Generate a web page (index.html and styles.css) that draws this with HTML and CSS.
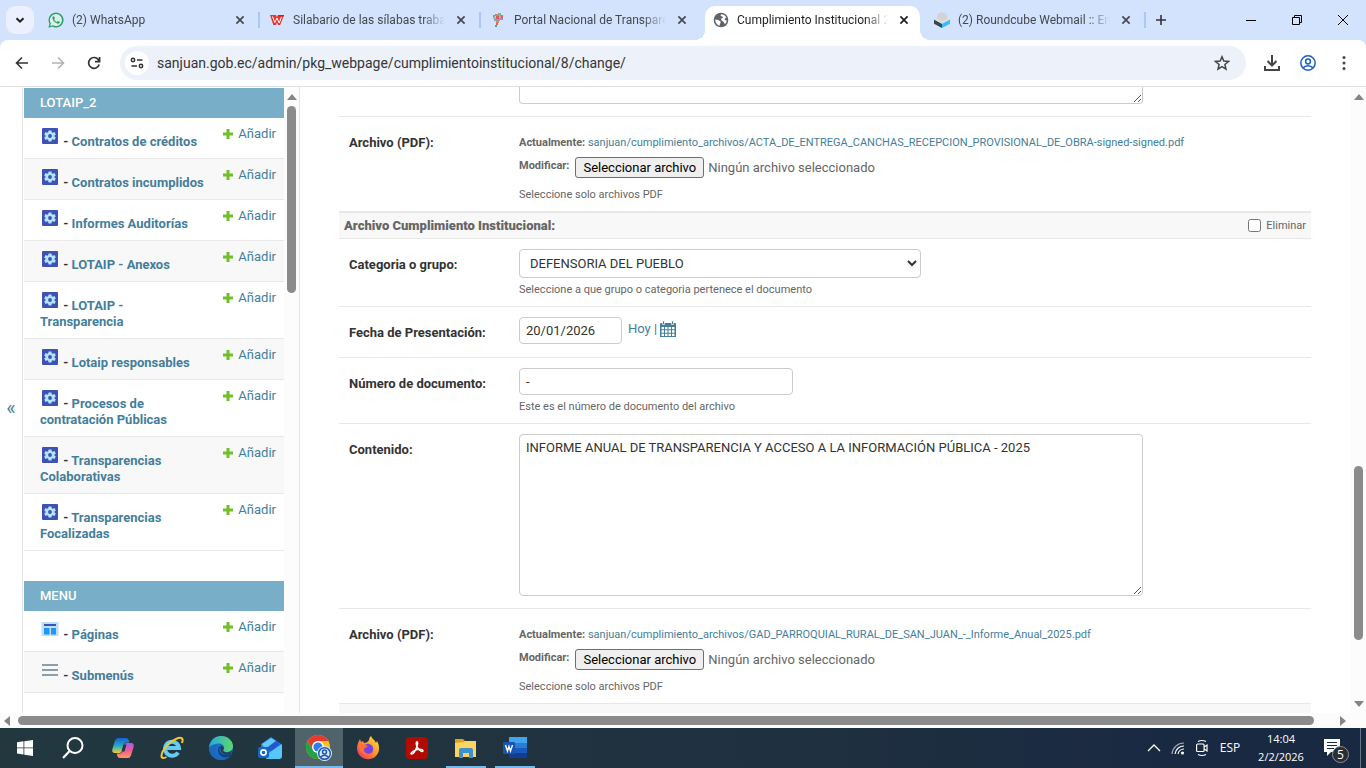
FILE: index.html
```html
<!DOCTYPE html>
<html lang="es">
<head>
<meta charset="utf-8">
<title>Cumplimiento Institucional</title>
<link rel="stylesheet" href="styles.css">
</head>
<body>
<svg class="defs" aria-hidden="true">
  <symbol id="close" viewBox="0 0 16 16"><path d="M4.400 4.400l7.200 7.200M11.600 4.400l-7.200 7.200" stroke="currentColor" stroke-width="1.700" fill="none"/></symbol>
  <symbol id="gear" viewBox="0 0 20 20"><rect x="2" y="2" width="16" height="16" rx="1" fill="#3f51b5"/><path fill="#b3e5fc" d="M8.600 4.500h2.800l.4 1.700 1 .5 1.700-.6 1.300 2.300-1.300 1.100v1l1.300 1.100-1.300 2.300-1.700-.6-1 .5-.4 1.700H8.600l-.4-1.700-1-.5-1.700.6-1.300-2.300 1.300-1.100v-1L4.200 8.400l1.300-2.300 1.700.6 1-.5z"/><circle cx="10" cy="10" r="1.900" fill="#3f51b5"/></symbol>
  <symbol id="plus" viewBox="0 0 12 12"><path d="M4.500 1h3v3.500H11v3H7.500V11h-3V7.500H1v-3h3.500z" fill="#70bf2b"/></symbol>
  <symbol id="grip" viewBox="0 0 10 10"><path d="M2 9L9 2M6 9l3-3" stroke="#555" stroke-width="1" fill="none"/></symbol>
</svg>

<header class="tabstrip">
  <button class="tab-search" aria-label="Buscar pestañas"><svg width="12" height="12" viewBox="0 0 12 12"><path d="M2.500 4.200L6 7.700l3.500-3.500" fill="none" stroke="#1f1f1f" stroke-width="2"/></svg></button>
  <div class="tab">
    <svg class="fav" viewBox="0 0 16 16"><path d="M.4 15.700l1.100-4A7.500 7.500 0 1 1 4.400 14.600z" fill="#25a366"/><path d="M2.200 13.900l.7-2.500a6 6 0 1 1 2 1.900z" fill="#dfeeed"/><path d="M5.600 4.200c-.5 0-1.300.8-1.200 1.900.2 2.600 3.600 5.600 5.700 5.600 1 0 1.900-.8 1.900-1.600 0-.4-1.700-1.200-2-1.200-.4 0-.7 1-1.100 1-.8-.1-2.600-1.700-2.700-2.500 0-.4.700-.7.600-1.200-.1-.4-.6-2-1.200-2z" fill="#25a366"/></svg>
    <span class="tab-title">(2) WhatsApp</span><button class="tab-close" aria-label="Cerrar"><svg viewBox="0 0 16 16"><use href="#close"/></svg></button>
  </div>
  <div class="tab">
    <svg class="fav" viewBox="0 0 16 16"><path d="M1 3h6l1 2 1-2h6l-3.800 10H8.800L8 10.300 7 13H4.300z" fill="#e8392e"/><path d="M3.500 4.500l2.300 6L8 6l2.200 5 2.400-6.500" fill="none" stroke="#fff" stroke-width="1"/><path d="M9 3h6l-.5 1.600H9.600z" fill="#c4201c"/></svg>
    <span class="tab-title">Silabario de las sílabas trabadas</span><button class="tab-close" aria-label="Cerrar"><svg viewBox="0 0 16 16"><use href="#close"/></svg></button>
  </div>
  <div class="tab no-line">
    <svg class="fav" viewBox="0 0 16 16"><g><rect x="3" y="3" width="2" height="2" fill="#5ba6c4"/><rect x="5" y="2" width="3" height="2" fill="#e2795a"/><rect x="8" y="1" width="3" height="3" fill="#6dbd9c"/><rect x="11" y="3" width="2" height="3" fill="#e05b6e"/><rect x="3" y="5" width="3" height="2" fill="#f0a45d"/><rect x="6" y="4" width="3" height="3" fill="#d35b6a"/><rect x="9" y="4" width="2" height="3" fill="#e8a06a"/><rect x="10" y="6" width="3" height="2" fill="#a38ab8"/><rect x="4" y="7" width="3" height="2" fill="#64b3ba"/><rect x="7" y="7" width="3" height="2" fill="#d98a7a"/><rect x="6" y="9" width="3" height="2" fill="#e58358"/><rect x="6" y="11" width="2" height="2" fill="#e05b6e"/><rect x="5" y="13" width="2" height="2" fill="#4f9fc4"/></g></svg>
    <span class="tab-title">Portal Nacional de Transparencia</span><button class="tab-close" aria-label="Cerrar"><svg viewBox="0 0 16 16"><use href="#close"/></svg></button>
  </div>
  <div class="tab active">
    <svg class="fav" viewBox="0 0 16 16"><circle cx="8" cy="8" r="7.300" fill="#5f6368"/><path d="M2.200 7.500l3.300.6 2.300 1.700-.6 1.800-.7 2.200C4 13 2.200 10.800 2.200 7.500z" fill="#fff"/><path d="M8 2.200c2.400 0 4.300 1.200 5.300 3.200L11.500 7l.8 1.300 1.500.2c-.2 1.500-.9 2.900-2 3.800L10.800 10 8.600 8.600 8 6.800l1.800-1-.4-1.300L7.600 4z" fill="#fff"/></svg>
    <span class="tab-title">Cumplimiento Institucional 2025</span><button class="tab-close" aria-label="Cerrar"><svg viewBox="0 0 16 16"><use href="#close"/></svg></button>
  </div>
  <div class="tab">
    <svg class="fav" viewBox="0 0 16 16"><circle cx="8" cy="5.500" r="5.200" fill="#d3d3d3"/><path d="M0 7.500l8 4.200v4.300l-8-4.200z" fill="#37474f"/><path d="M16 7.500l-8 4.200v4.300l8-4.200z" fill="#35beff"/><path d="M0 7.500l3-1.500 5 3 5-3 3 1.500-8 4.300z" fill="#d9dde0"/></svg>
    <span class="tab-title">(2) Roundcube Webmail :: Entrada</span><button class="tab-close" aria-label="Cerrar"><svg viewBox="0 0 16 16"><use href="#close"/></svg></button>
  </div>
  <button class="new-tab" aria-label="Nueva pestaña"><svg width="12" height="12" viewBox="0 0 12 12"><path d="M6 1v10M1 6h10" stroke="#333" stroke-width="1.600"/></svg></button>
  <div class="window-buttons">
    <button aria-label="Minimizar"><svg width="10" height="10" viewBox="0 0 10 10"><path d="M0 5.500h10" stroke="#000"/></svg></button>
    <button aria-label="Restaurar"><svg width="10" height="10" viewBox="0 0 10 10"><path d="M.5 2.500h7v7h-7zM2.500 2.500v-2h7v7h-2" fill="none" stroke="#000"/></svg></button>
    <button aria-label="Cerrar ventana"><svg width="10" height="10" viewBox="0 0 10 10"><path d="M0 0l10 10M10 0L0 10" stroke="#000"/></svg></button>
  </div>
</header>

<div class="toolbar-wrap">
<div class="toolbar">
  <div class="nav-buttons">
    <button aria-label="Atrás"><svg width="16" height="16" viewBox="0 0 16 16"><path d="M14 8H3M8 2.500L2.500 8 8 13.500" fill="none" stroke="#333" stroke-width="1.600"/></svg></button>
    <button aria-label="Adelante"><svg width="16" height="16" viewBox="0 0 16 16"><path d="M2 8h11M8 2.500L13.500 8 8 13.500" fill="none" stroke="#b0b2b5" stroke-width="1.600"/></svg></button>
    <button aria-label="Recargar"><svg width="16" height="16" viewBox="0 0 16 16"><path d="M13.200 9.500A5.400 5.400 0 1 1 12.600 5L13.500 6.500M13.600 2v4.700H9" fill="none" stroke="#333" stroke-width="1.700"/></svg></button>
  </div>
  <div class="omnibox">
    <button class="site-info" aria-label="Información del sitio"><svg width="14" height="14" viewBox="0 0 14 14"><g fill="none" stroke="#333" stroke-width="1.500"><circle cx="3" cy="4" r="1.700"/><path d="M7 4h5.500M1.500 10H7"/><circle cx="11" cy="10" r="1.700"/></g></svg></button>
    <input class="url" type="text" aria-label="Dirección" value="sanjuan.gob.ec/admin/pkg_webpage/cumplimientoinstitucional/8/change/">
    <button class="star" aria-label="Marcador"><svg width="16" height="16" viewBox="0 0 16 16"><path d="M8 1.800l1.800 4.300 4.700.4-3.600 3 1.100 4.600L8 11.700l-4 2.400 1.100-4.600-3.600-3 4.700-.4z" fill="none" stroke="#444" stroke-width="1.500"/></svg></button>
  </div>
  <div class="nav-buttons">
    <button aria-label="Descargas"><svg width="16" height="16" viewBox="0 0 16 16"><path d="M8 0v10M3.500 6L8 10.500 12.500 6M1 11v4h14v-4" fill="none" stroke="#444" stroke-width="2"/></svg></button>
    <button aria-label="Perfil"><svg width="16" height="16" viewBox="0 0 16 16"><g fill="none" stroke="#1a5dc8" stroke-width="1.500"><circle cx="8" cy="8" r="7.200"/><circle cx="8" cy="6.500" r="2.400"/><path d="M3 13c2.500-3 7.500-3 10 0"/></g></svg></button>
    <button aria-label="Menú"><svg width="16" height="16" viewBox="0 0 16 16"><g fill="#444"><circle cx="8" cy="2.500" r="1.500"/><circle cx="8" cy="8" r="1.500"/><circle cx="8" cy="13.500" r="1.500"/></g></svg></button>
  </div>
</div>
</div>

<div class="viewport">
  <button class="toggle-nav" aria-label="Conmutar navegación">«</button>
  <nav class="sidebar">
    <div class="modules">
      <table>
        <caption>LOTAIP_2</caption>
        <tr><th scope="row"><svg class="ico" viewBox="0 0 20 20"><use href="#gear"/></svg> - <a href="#">Contratos de créditos</a></th><td><a class="add" href="#"><svg viewBox="0 0 12 12"><use href="#plus"/></svg>Añadir</a></td></tr>
        <tr><th scope="row"><svg class="ico" viewBox="0 0 20 20"><use href="#gear"/></svg> - <a href="#">Contratos incumplidos</a></th><td><a class="add" href="#"><svg viewBox="0 0 12 12"><use href="#plus"/></svg>Añadir</a></td></tr>
        <tr><th scope="row"><svg class="ico" viewBox="0 0 20 20"><use href="#gear"/></svg> - <a href="#">Informes Auditorías</a></th><td><a class="add" href="#"><svg viewBox="0 0 12 12"><use href="#plus"/></svg>Añadir</a></td></tr>
        <tr><th scope="row"><svg class="ico" viewBox="0 0 20 20"><use href="#gear"/></svg> - <a href="#">LOTAIP - Anexos</a></th><td><a class="add" href="#"><svg viewBox="0 0 12 12"><use href="#plus"/></svg>Añadir</a></td></tr>
        <tr><th scope="row"><svg class="ico" viewBox="0 0 20 20"><use href="#gear"/></svg> - <a href="#">LOTAIP - Transparencia</a></th><td><a class="add" href="#"><svg viewBox="0 0 12 12"><use href="#plus"/></svg>Añadir</a></td></tr>
        <tr><th scope="row"><svg class="ico" viewBox="0 0 20 20"><use href="#gear"/></svg> - <a href="#">Lotaip responsables</a></th><td><a class="add" href="#"><svg viewBox="0 0 12 12"><use href="#plus"/></svg>Añadir</a></td></tr>
        <tr><th scope="row"><svg class="ico" viewBox="0 0 20 20"><use href="#gear"/></svg> - <a href="#">Procesos de contratación Públicas</a></th><td><a class="add" href="#"><svg viewBox="0 0 12 12"><use href="#plus"/></svg>Añadir</a></td></tr>
        <tr><th scope="row"><svg class="ico" viewBox="0 0 20 20"><use href="#gear"/></svg> - <a href="#">Transparencias Colaborativas</a></th><td><a class="add" href="#"><svg viewBox="0 0 12 12"><use href="#plus"/></svg>Añadir</a></td></tr>
        <tr><th scope="row"><svg class="ico" viewBox="0 0 20 20"><use href="#gear"/></svg> - <a href="#">Transparencias Focalizadas</a></th><td><a class="add" href="#"><svg viewBox="0 0 12 12"><use href="#plus"/></svg>Añadir</a></td></tr>
      </table>
      <table>
        <caption>MENU</caption>
        <tr><th scope="row"><svg class="ico" viewBox="0 0 20 20"><rect x="1.500" y="3" width="17" height="14" fill="#bbdefb"/><path d="M4 5h12v2H4z" fill="#3f51b5"/><path d="M4 9h5.500v6.500H4zM11 9h5v6.500h-5z" fill="#2196f3"/></svg> - <a href="#">Páginas</a></th><td><a class="add" href="#"><svg viewBox="0 0 12 12"><use href="#plus"/></svg>Añadir</a></td></tr>
        <tr><th scope="row"><svg class="ico" viewBox="0 0 20 20"><path d="M2 5h16M2 10h16M2 15h16" stroke="#8a9fa9" stroke-width="2"/></svg> - <a href="#">Submenús</a></th><td><a class="add" href="#"><svg viewBox="0 0 12 12"><use href="#plus"/></svg>Añadir</a></td></tr>
      </table>
    </div>
    <div class="vscroll"><i class="arrow up"></i><span class="thumb side-thumb"></span></div>
  </nav>

  <main class="content">
    <form class="inline">
      <div class="row row-cut"><span class="label"></span><div class="field"><div class="area-wrap"><textarea class="area-cut" aria-label="Contenido anterior"></textarea><svg class="grip" viewBox="0 0 10 10"><use href="#grip"/></svg></div></div></div>
      <div class="row">
        <label class="label" for="file1">Archivo (PDF):</label>
        <div class="field">
          <p class="current"><b>Actualmente:</b> <a href="#">sanjuan/cumplimiento_archivos/ACTA_DE_ENTREGA_CANCHAS_RECEPCION_PROVISIONAL_DE_OBRA-signed-signed.pdf</a></p>
          <div class="change"><b>Modificar:</b><button type="button" id="file1">Seleccionar archivo</button><span>Ningún archivo seleccionado</span></div>
          <div class="help">Seleccione solo archivos PDF</div>
        </div>
      </div>
      <h3 class="inline-head"><b>Archivo Cumplimiento Institucional:</b><label class="del"><input type="checkbox">Eliminar</label></h3>
      <div class="row">
        <label class="label" for="cat">Categoria o grupo:</label>
        <div class="field"><select id="cat"><option>DEFENSORIA DEL PUEBLO</option></select><div class="help">Seleccione a que grupo o categoria pertenece el documento</div></div>
      </div>
      <div class="row">
        <label class="label" for="fecha">Fecha de Presentación:</label>
        <div class="field date"><input id="fecha" class="date-input" type="text" value="20/01/2026"><span class="shortcuts"><a href="#">Hoy</a>&nbsp;|&nbsp;<a href="#" aria-label="Calendario"><svg width="16" height="16" viewBox="0 0 16 16"><path d="M0 3q0-1 1-1h14q1 0 1 1v13H0z" fill="#447e9b"/><path d="M2.500 0h2v3.500h-2zM11.500 0h2v3.500h-2z" fill="#447e9b" stroke="#fff" stroke-width=".7"/><path d="M1.500 6h2.500v2.300H1.500zM5 6h2.500v2.300H5zM8.500 6H11v2.300H8.500zM12 6h2.500v2.300H12zM1.500 9.300H4v2.400H1.500zM5 9.300h2.500v2.400H5zM8.500 9.300H11v2.400H8.500zM12 9.300h2.500v2.400H12zM1.500 12.700H4V15H1.500zM5 12.700h2.500V15H5zM8.500 12.700H11V15H8.500zM12 12.700h2.500V15H12z" fill="#fff"/></svg></a></span></div>
      </div>
      <div class="row">
        <label class="label" for="num">Número de documento:</label>
        <div class="field"><input id="num" class="num-input" type="text" value="-"><div class="help">Este es el número de documento del archivo</div></div>
      </div>
      <div class="row">
        <label class="label" for="cont">Contenido:</label>
        <div class="field"><div class="area-wrap area-full"><textarea id="cont">INFORME ANUAL DE TRANSPARENCIA Y ACCESO A LA INFORMACIÓN PÚBLICA - 2025</textarea><svg class="grip" viewBox="0 0 10 10"><use href="#grip"/></svg></div></div>
      </div>
      <div class="row">
        <label class="label" for="file2">Archivo (PDF):</label>
        <div class="field">
          <p class="current"><b>Actualmente:</b> <a href="#">sanjuan/cumplimiento_archivos/GAD_PARROQUIAL_RURAL_DE_SAN_JUAN_-_Informe_Anual_2025.pdf</a></p>
          <div class="change"><b>Modificar:</b><button type="button" id="file2">Seleccionar archivo</button><span>Ningún archivo seleccionado</span></div>
          <div class="help">Seleccione solo archivos PDF</div>
        </div>
      </div>
      <div class="next-head"></div>
    </form>
  </main>
  <div class="vscroll page-scroll"><i class="arrow up"></i><span class="thumb page-thumb"></span><i class="arrow down"></i></div>
</div>
<div class="hscroll"><i class="arrow left"></i><span class="thumb"></span><i class="arrow right"></i></div>

<footer class="taskbar">
  <div class="apps">
    <button aria-label="Inicio"><svg width="16" height="16" viewBox="0 0 16 16"><path d="M0 2.300L6.500 1.300v6.200H0zM7.300 1.200L16 0v7.500H7.300zM0 8.300h6.500v6.200L0 13.600zM7.300 8.300H16V16l-8.700-1.200z" fill="#fff"/></svg></button>
    <button aria-label="Buscar"><svg width="24" height="24" viewBox="0 0 24 24"><circle cx="13" cy="9.500" r="7.500" fill="none" stroke="#fff" stroke-width="2"/><path d="M7.700 15L1 22" stroke="#fff" stroke-width="2.200"/></svg></button>
    <button aria-label="Copilot"><svg width="24" height="24" viewBox="0 0 24 24"><defs><linearGradient id="c1" x2="0" y2="1"><stop offset="0" stop-color="#1a5fd8"/><stop offset=".5" stop-color="#22a8c4"/><stop offset="1" stop-color="#e8ce3b"/></linearGradient><linearGradient id="c2" x2="0" y2="1"><stop offset="0" stop-color="#a95af0"/><stop offset=".5" stop-color="#ee5a94"/><stop offset="1" stop-color="#ff9a5c"/></linearGradient></defs><path d="M7 2h8q2 0 2.700 2l.7 2.500H15q-1.800 0-2.300 2L11 15q-.7 2-2.500 2H4q-3.500 0-2.600-4L4 4.500Q5 2 7 2z" fill="url(#c1)"/><path d="M17 22H9q-2 0-2.700-2L5.600 17.500H9q1.800 0 2.300-2L13 9q.7-2 2.500-2H20q3.500 0 2.600 4L20 19.500Q19 22 17 22z" fill="url(#c2)"/><path d="M12.500 8.500h3l-2 7h-3z" fill="#24373f"/></svg></button>
    <button aria-label="Internet Explorer"><svg width="26" height="26" viewBox="0 0 26 26"><path d="M19 17.500a7 7 0 1 1 1-4.500H8" fill="none" stroke="#62ccf4" stroke-width="4"/><path d="M23 8c2-5-1-6.500-6-4C10 7 3 15 2.500 20.500c-.3 3 2.500 3 5 1.500" fill="none" stroke="#f3c834" stroke-width="2"/></svg></button>
    <button aria-label="Edge"><svg width="24" height="24" viewBox="0 0 24 24"><defs><linearGradient id="e1"><stop offset="0" stop-color="#28a9dc"/><stop offset="1" stop-color="#5ed66b"/></linearGradient></defs><circle cx="12" cy="12" r="12" fill="#1474cc"/><path d="M0 12C1 4 6 0 12 0c7 0 12 5 12 10 0 4-3 6-6.500 6-3 0-4-1.500-3-3 1.500-3-1-5.500-4.500-5.500S2 9 0 12z" fill="url(#e1)"/><path d="M9 9c-4 3-3 10 3 12.500 3 1 7 0 9.500-2C19 23 15.500 24 12 24 6 24 0 19 0 12c1.500-3 5-4.500 9-3z" fill="#1b69be"/><path d="M12.500 9.500c-3 1.500-3.500 8 3 9.500 3 .5 6-1 6.500-1.500l-.5 2c-3 2.500-9 3-11.500-1.500C8 15 9 10 12.500 9.500z" fill="#123f82"/><path d="M12.500 9.500q4 1.500 1.500 5.500 2 2 5.500 1.300l3.500-1.800-1 3.500c-3 1.500-8 1-9.500-1.500s-2-5 0-7z" fill="#24373f" opacity=".85"/></svg></button>
    <button aria-label="Outlook"><svg width="24" height="24" viewBox="0 0 24 24"><path d="M3 8L13 1l10 7v14H3z" fill="#207ff0"/><path d="M4 8l9-6 5 3-11 8z" fill="#65caf7"/><path d="M9 12l9-7 4 3-9 8z" fill="#2558cf"/><path d="M12 16L24 8v12q0 3-3 3H8z" fill="#55c7fb"/><rect y="11" width="11" height="11" rx="2" fill="#1464c9"/><circle cx="5.500" cy="16.500" r="2.600" fill="none" stroke="#fff" stroke-width="1.600"/></svg></button>
    <button class="running current-app" aria-label="Chrome"><svg width="26" height="26" viewBox="0 0 26 26"><circle cx="12" cy="12" r="12" fill="#fbc116"/><path d="M1.600 6A12 12 0 0 1 22.400 6H12L7 15z" fill="#e33b2e"/><path d="M1.600 6A12 12 0 0 0 12 24l5-9H7z" fill="#24a148"/><circle cx="12" cy="12" r="6" fill="#fff"/><circle cx="12" cy="12" r="4.600" fill="#2f7de9"/><circle cx="18.500" cy="18.500" r="7.500" fill="#dce9fb"/><g fill="none" stroke="#1a5ab4" stroke-width="1.500"><circle cx="18.500" cy="18.500" r="5.800"/><circle cx="18.500" cy="17" r="2"/><path d="M14.500 22q4-3.500 8 0"/></g></svg></button>
    <button aria-label="Firefox"><svg width="24" height="24" viewBox="0 0 24 24"><defs><linearGradient id="f1" x1="1" x2="0" y2="1"><stop offset="0" stop-color="#fff044"/><stop offset=".45" stop-color="#ff9626"/><stop offset="1" stop-color="#f0256e"/></linearGradient></defs><path d="M1 12C1 8 3 5 4 3l1 3 2-1 1 2c2 0 4-1 5-3 0-2 1-3 2-4 1 3 4 4 5 7l1-2c3 5 3 12-2 16C12 26 1 22 1 12z" fill="url(#f1)"/><circle cx="12" cy="13" r="5.200" fill="#7542e5"/><path d="M2 9c4-2 7 0 10 1-1 2-4 1-4 4 1 5 8 5 10 0-1 7-14 8-16-5z" fill="#ff7139"/></svg></button>
    <button aria-label="Acrobat"><svg width="22" height="22" viewBox="0 0 22 22"><rect width="22" height="22" rx="4" fill="#b30b00"/><path d="M10.500 5c1.500-1 1.500 2 .3 5-1.500 4-4 7.500-5.600 7-1.500-1 4-4.700 8-4.700 3 0 4.500 1 3.500 2-2 1-6.700-4-6.500-7.500 0-1 0-1.600.3-1.800z" fill="none" stroke="#fff" stroke-width="1.400"/></svg></button>
    <button class="running" aria-label="Explorador"><svg width="24" height="24" viewBox="0 0 24 24"><path d="M1 3h8l2 2h11v16H1z" fill="#dfa31f"/><path d="M1 7l9-1 1-1h11v16H1z" fill="#fcd462"/><path d="M5 14q0-2 2-2h10q2 0 2 2v8h-4v-5H9v5H5z" fill="#3d92ce"/></svg></button>
    <button class="running" aria-label="Word"><svg width="24" height="24" viewBox="0 0 24 24"><path d="M6 1h18v6H6z" fill="#41a5ee"/><path d="M6 7h18v5H6z" fill="#2b7cd3"/><path d="M6 12h18v5H6z" fill="#185abd"/><path d="M6 17h18v5H6z" fill="#103f91"/><rect y="6" width="12" height="12" rx="1" fill="#1854b0"/><path d="M2.500 9l2 6L6 10.500 7.500 15l2-6" fill="none" stroke="#fff" stroke-width="1.400"/></svg></button>
  </div>
  <div class="tray">
    <button aria-label="Iconos ocultos"><svg width="14" height="14" viewBox="0 0 14 14"><path d="M1 10l6-6 6 6" fill="none" stroke="#fff" stroke-width="1.300"/></svg></button>
    <button aria-label="Red"><svg width="14" height="14" viewBox="0 0 14 14"><g fill="none" stroke="#fff" stroke-width="1.200"><path d="M1 13A12 12 0 0 1 13 2" opacity=".6"/><path d="M4 13a9 9 0 0 1 9-8M7 13a6 6 0 0 1 6-5"/></g><circle cx="11.500" cy="12" r="1.600" fill="#fff"/></svg></button>
    <button aria-label="Reunión"><svg width="14" height="18" viewBox="0 0 14 18"><g fill="none" stroke="#fff" stroke-width="1.200"><rect x="1.600" y="5" width="7.500" height="7.500" rx="1"/><path d="M9 8l3-2v6L9 10M3 2.500q4-2 8 0M3 15.500q4 2 8 0"/></g></svg></button>
    <span class="lang">ESP</span>
    <time class="clock"><span>14:04</span><span>2/2/2026</span></time>
    <button class="notes" aria-label="5 notificaciones"><svg width="18" height="18" viewBox="0 0 18 18"><path d="M0 0h16v13H7l-4 4v-4H0z" fill="#fff"/><path d="M3 3.500h10M3 6.500h10M3 9.500h7" stroke="#1c2b40"/></svg><span class="badge">5</span></button>
    <span class="peek"></span>
  </div>
</footer>
</body>
</html>
```
FILE: styles.css
```css
* { box-sizing: border-box; }
body {
  margin: 0;
  height: 100vh;
  display: flex;
  flex-direction: column;
  overflow: hidden;
  background: #fff;
  color: #333;
  font: 13px/16px Roboto, sans-serif;
}
button { border: 0; background: none; padding: 0; font: inherit; color: inherit; }
a { color: #447e9b; text-decoration: none; }
.defs { position: absolute; width: 0; height: 0; }

/* Browser tabs */
.tabstrip {
  flex: none;
  height: 40px;
  display: flex;
  align-items: center;
  padding-left: 6px;
  background: #d3e2fd;
  color: #45484d;
  font: 12px/16px Roboto, sans-serif;
}
.tab-search {
  display: flex;
  align-items: center;
  justify-content: center;
  flex: none;
  width: 28px;
  height: 28px;
  margin-right: 4px;
  border-radius: 9px;
  background: #eaf0fd;
}
.tab {
  position: relative;
  flex: 0 1 221px;
  min-width: 0;
  height: 34px;
  align-self: flex-end;
  display: flex;
  align-items: center;
  gap: 8px;
  padding: 0 11px 6px 10px;
}
.tab::after {
  content: "";
  position: absolute;
  right: -1px;
  top: 6px;
  width: 2px;
  height: 16px;
  background: #a8c7fa;
}
.tab.no-line::after { display: none; }
.tab.active {
  flex-basis: 215px;
  margin: 0 4px;
  padding: 0 8px 6px;
  border-radius: 10px 10px 0 0;
  background: #fff;
  color: #1f1f1f;
}
.tab.active::before, .tab.active::after {
  content: "";
  display: block;
  position: absolute;
  top: auto;
  bottom: 0;
  width: 10px;
  height: 10px;
}
.tab.active::before { left: -10px; background: radial-gradient(circle at 0 0, transparent 10px, #fff 10px); }
.tab.active::after { right: -10px; background: radial-gradient(circle at 100% 0, transparent 10px, #fff 10px); }
.fav { flex: none; width: 16px; height: 16px; }
.tab-title {
  flex: 1;
  min-width: 0;
  overflow: hidden;
  white-space: nowrap;
  mask-image: linear-gradient(to right, #000 85%, transparent);
}
.tab-close { flex: none; width: 16px; height: 16px; }
.tab-close svg { display: block; width: 16px; height: 16px; }
.new-tab { display: flex; justify-content: center; width: 32px; }
.window-buttons { display: flex; margin-left: auto; }
.window-buttons button { display: flex; align-items: center; justify-content: center; width: 46px; height: 40px; }

/* Address bar */
.toolbar-wrap { flex: none; background: #d3e2fd; }
.toolbar {
  display: flex;
  align-items: center;
  height: 47px;
  padding: 0 4px;
  border-bottom: 1px solid #dfe1e5;
  border-radius: 8px 8px 0 0;
  background: #fff;
}
.nav-buttons { display: flex; }
.nav-buttons button { display: flex; align-items: center; justify-content: center; width: 36px; height: 34px; }
.omnibox {
  flex: 1;
  display: flex;
  align-items: center;
  gap: 8px;
  height: 34px;
  margin: 0 8px;
  padding: 0 16px 0 5px;
  border-radius: 17px;
  background: #edf1fa;
}
.site-info { display: flex; align-items: center; justify-content: center; width: 24px; height: 24px; border-radius: 50%; background: #fff; }
.star { display: flex; }

/* Page area */
.viewport { flex: 1; min-height: 0; display: flex; overflow: hidden; }
.toggle-nav { flex: none; width: 22px; color: #447e9b; font-size: 20px; padding-top: 16px; }
.sidebar { flex: none; display: flex; overflow: hidden; padding-left: 1px; border: solid #e4e4e4; border-width: 0 1px; }
.modules { width: 260px; padding-top: 1px; }
.modules table { width: 100%; margin-bottom: 30px; border-collapse: separate; border-spacing: 0; }
.modules caption { padding: 7px 16px; background: #79aec8; color: #fff; text-align: left; font-weight: 500; }
.modules th, .modules td { padding: 8px; border-bottom: 1px solid #e8e8e8; text-align: left; vertical-align: top; }
.modules th { padding-left: 16px; font-weight: 700; }
.modules td { width: 1%; white-space: nowrap; }
.modules tr:nth-child(even) { background: #f8f8f8; }
.ico { width: 20px; height: 20px; }
.add { display: flex; gap: 4px; align-items: center; }
.add svg { width: 12px; height: 12px; }

/* Scroll bars */
.vscroll { flex: none; width: 15px; display: flex; flex-direction: column; align-items: center; padding-top: 7px; background: #fcfcfc; }
.thumb { background: #8b8b8b; border-radius: 5px; }
.side-thumb { width: 9px; height: 187px; margin-top: 6px; }
.page-scroll { padding-bottom: 6px; }
.page-thumb { width: 9px; height: 174px; margin: auto 0 61px; }
.arrow { width: 0; height: 0; border: 5px solid transparent; }
.arrow.up { border-top: 0; border-bottom: 6px solid #858585; }
.arrow.down { border-bottom: 0; border-top: 6px solid #858585; }
.arrow.left { border-left: 0; border-right: 6px solid #858585; }
.arrow.right { border-right: 0; border-left: 6px solid #858585; }
.hscroll { flex: none; display: flex; align-items: center; height: 15px; padding: 0 20px 0 4px; background: #fcfcfc; }
.hscroll .thumb { flex: 1; height: 9px; margin: 0 26px 0 8px; }

/* Form */
.content { flex: 1; min-width: 0; padding: 0 40px 0 39px; overflow: hidden; }
.row { display: flex; padding: 10px; border-bottom: 1px solid #e8e8e8; }
.row-cut { padding-top: 0; }
.label { flex: none; width: 170px; padding-top: 8px; font-weight: 700; }
.row-cut .label { padding-top: 0; }
.field { flex: 1; min-width: 0; color: #666; }
.help { margin-top: 5px; font-size: 11px; line-height: 13px; color: #666; }
input[type="text"], select, textarea {
  display: block;
  border: 1px solid #ccc;
  border-radius: 4px;
  background: #fff;
  color: #333;
  font: 13px/16px Roboto, sans-serif;
}
.field input[type="text"] { height: 27px; padding: 5px 6px; }
.field .num-input { width: 274px; }
.field .date-input { width: 103px; }
.omnibox .url { flex: 1; min-width: 0; padding: 0; border: 0; background: none; color: #33363a; font: 14px/20px Roboto, sans-serif; }
select { width: 402px; height: 29px; padding: 5px 6px; }
.date { display: flex; align-items: flex-start; min-height: 30px; }
.shortcuts { display: flex; align-items: center; height: 24px; padding-left: 6px; }
.shortcuts svg { display: block; }
.area-wrap { position: relative; width: 624px; padding-bottom: 2px; }
textarea { width: 100%; height: 162px; padding: 5px 6px; resize: none; overflow: hidden; }
textarea.area-cut { height: 17px; border-top: 0; border-radius: 0 0 4px 4px; }
.grip { position: absolute; right: 1px; bottom: 3px; width: 10px; height: 10px; }
.current { margin: 0; padding-top: 9px; font-size: 11px; line-height: 14px; }
.change { display: flex; align-items: flex-start; height: 29px; padding-top: 7px; }
.change b { font-size: 11px; line-height: 18px; }
.change button { height: 21px; margin: 0 4px 0 6px; padding: 0 7px; border: 1px solid #6f6f6f; border-radius: 3px; background: #efefef; color: #000; }
.change span { line-height: 21px; }
.change + .help { margin-top: 9px; }
.inline-head {
  display: flex;
  align-items: center;
  justify-content: space-between;
  height: 27px;
  margin: 0;
  padding: 0 5px;
  border: solid #e8e8e8;
  border-width: 1px 0;
  background: #f8f8f8;
  color: #666;
  font-size: 13px;
}
.del { display: flex; align-items: center; gap: 5px; font-size: 11px; font-weight: 400; }
.del input { margin: 0; }
.next-head { height: 27px; background: #f8f8f8; }

/* Taskbar */
.taskbar { flex: none; display: flex; justify-content: space-between; height: 40px; background: linear-gradient(90deg, #22383f, #1f3040 60%, #1a2942 85%); color: #fff; }
.apps { display: flex; gap: 1px; padding-left: 1px; }
.apps button { position: relative; display: flex; align-items: center; justify-content: center; width: 48px; }
.running::after { content: ""; position: absolute; left: 4px; right: 4px; bottom: 0; height: 2px; background: #76b9ed; }
.current-app { background: #50626a; }
.current-app::after { left: 0; right: 0; }
.tray { display: flex; align-items: center; font: 12px/16px "Open Sans", sans-serif; }
.tray button { display: flex; align-items: center; justify-content: center; width: 24px; height: 40px; }
.lang { width: 32px; text-align: center; }
.clock { display: flex; flex-direction: column; align-items: center; width: 70px; font-size: 11px; line-height: 18px; }
.tray .notes { position: relative; justify-content: flex-start; width: 44px; padding-left: 8px; }
.badge { position: absolute; right: 11px; bottom: 5px; width: 17px; height: 17px; border: 1px solid #8b8f95; border-radius: 50%; background: #2a2d33; font-size: 12px; line-height: 15px; text-align: center; }
.peek { width: 6px; height: 40px; border-left: 1px solid #6a7484; }
```
